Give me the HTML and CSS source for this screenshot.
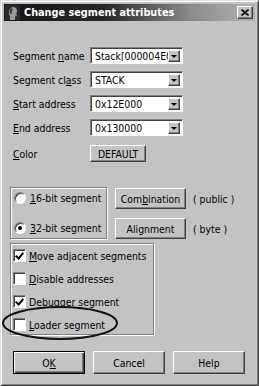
FILE: index.html
```html
<!DOCTYPE html>
<html lang="en">

<head>
    <meta charset="UTF-8">
    <title>Change segment attributes</title>
    <link rel="stylesheet" href="styles.css">
</head>

<body>
    <div class="window">
        <div class="titlebar">
            <svg class="app-icon" width="15" height="15" viewBox="0 0 15 15">
                <rect width="15" height="15" fill="#2a2a2a"/>
                <path d="M5 15 L5 11 Q3 9 4 6 Q5 2 9 2 Q12 3 12 6 Q12 8 11 9 L12 11 Q10 11 10 12 L10 15 Z" fill="#9a9a9a"/>
                <path d="M6 3 Q4 5 5 9 Q6 8 7 9 Q6 6 8 4 Z" fill="#3a3a3a"/>
            </svg>
            <span class="title">Change segment attributes</span>
            <span class="close-btn">
                <svg width="8" height="7" viewBox="0 0 8 7">
                    <path d="M0.5 0.5 L7.5 6.5 M7.5 0.5 L0.5 6.5" stroke="black" stroke-width="1.6"/>
                </svg>
            </span>
        </div>

        <div class="content">
            <div class="fields">
                <label>Segment <u>n</u>ame</label>
                <div class="combo"><span class="combo-text">Stack[000004E0]</span><span class="combo-arrow"></span></div>

                <label>Segment cl<u>a</u>ss</label>
                <div class="combo"><span class="combo-text">STACK</span><span class="combo-arrow"></span></div>

                <label><u>S</u>tart address</label>
                <div class="combo"><span class="combo-text">0x12E000</span><span class="combo-arrow"></span></div>

                <label><u>E</u>nd address</label>
                <div class="combo"><span class="combo-text">0x130000</span><span class="combo-arrow"></span></div>

                <label class="color-label"><u>C</u>olor</label>
                <button class="btn color-btn">DEFAULT</button>
            </div>

            <div class="bitness">
                <div class="group radios">
                    <div class="option"><span class="radio"></span><span><u>1</u>6-bit segment</span></div>
                    <div class="option"><span class="radio checked"></span><span><u>3</u>2-bit segment</span></div>
                </div>
                <div class="attrs">
                    <div class="attr"><button class="btn attr-btn">Com<u>b</u>ination</button><span>(&nbsp;public&nbsp;)</span></div>
                    <div class="attr"><button class="btn attr-btn">Ali<u>g</u>nment</button><span>(&nbsp;byte&nbsp;)</span></div>
                </div>
            </div>

            <div class="group checks">
                <div class="option"><span class="check checked"></span><span><u>M</u>ove adjacent segments</span></div>
                <div class="option"><span class="check"></span><span><u>D</u>isable addresses</span></div>
                <div class="option"><span class="check checked"></span><span>Debu<u>g</u>ger segment</span></div>
                <div class="option"><span class="check"></span><span><u>L</u>oader segment</span></div>
            </div>

            <div class="actions">
                <button class="btn dlg-btn default">O<u>K</u></button>
                <button class="btn dlg-btn">Cancel</button>
                <button class="btn dlg-btn">Help</button>
            </div>
        </div>

        <!-- hand drawn mark around the loader option -->
        <svg class="mark" width="125" height="46" viewBox="0 0 125 46">
            <ellipse cx="59" cy="22" rx="57" ry="16" fill="none" stroke="#111" stroke-width="2"/>
        </svg>
    </div>
</body>

</html>
```

FILE: styles.css
```css
body {
    margin: 0;
    background-color: #c3c3c3;
    color: black;
    font-family: "DejaVu Sans Condensed", "DejaVu Sans", sans-serif;
    font-size: 10.4px;
}

.window {
    position: relative;
    width: 259px;
    height: 386px;
    box-sizing: border-box;
    padding: 3px;
    border: 1px solid;
    border-color: #e0e0e0 #404040 #404040 #e0e0e0;
    box-shadow: inset 1px 1px #fff, inset -1px -1px #808080;
    background-color: #c3c3c3;
}

.titlebar {
    display: flex;
    align-items: center;
    height: 17px;
    padding-left: 1px;
    background: linear-gradient(90deg, #161616 0%, #262626 40%, #8c8c8c 75%, #b2b2b2 100%);
}

.app-icon {
    margin-right: 4px;
}

.title {
    flex: 1;
    color: white;
    font-weight: bold;
    font-size: 10.8px;
}

.close-btn {
    display: flex;
    align-items: center;
    justify-content: center;
    width: 16px;
    height: 13px;
    margin-right: 2px;
    box-sizing: border-box;
    background-color: #c3c3c3;
    border: 1px solid;
    border-color: #fff #404040 #404040 #fff;
    box-shadow: inset -1px -1px #808080;
}

.content {
    padding: 26px 0 0 6px;
}

.fields {
    display: grid;
    grid-template-columns: 77px 93px;
    row-gap: 7px;
    align-items: center;
    margin-left: 3px;
}

.combo {
    display: flex;
    height: 17px;
    box-sizing: border-box;
    border: 1px solid;
    border-color: #808080 #fff #fff #808080;
    box-shadow: inset 1px 1px #404040;
    background-color: white;
    padding: 2px 2px 2px 1px;
}

.combo-text {
    flex: 1;
    overflow: hidden;
    white-space: nowrap;
    padding-left: 3px;
    line-height: 12px;
}

.combo-arrow {
    position: relative;
    width: 12px;
    height: 12px;
    box-sizing: border-box;
    background-color: #c3c3c3;
    border: 1px solid;
    border-color: #fff #404040 #404040 #fff;
    box-shadow: inset -1px -1px #808080;
}

.combo-arrow::after {
    content: "";
    position: absolute;
    left: 2px;
    top: 4px;
    border-left: 3px solid transparent;
    border-right: 3px solid transparent;
    border-top: 3px solid black;
}

.btn {
    box-sizing: border-box;
    padding: 0;
    font-family: inherit;
    font-size: inherit;
    color: black;
    background-color: #c3c3c3;
    border: 1px solid;
    border-color: #fff #404040 #404040 #fff;
    box-shadow: inset -1px -1px #808080;
}

.color-label,
.color-btn {
    margin-top: 2px;
}

.color-btn {
    width: 56px;
    height: 17px;
}

.bitness {
    display: flex;
    gap: 8px;
    margin-top: 25px;
}

.group {
    box-sizing: border-box;
    border: 1px solid #808080;
    box-shadow: inset 1px 1px #fff, 1px 1px #fff;
}

.option {
    display: flex;
    align-items: center;
    white-space: nowrap;
}

.radios {
    display: flex;
    flex-direction: column;
    gap: 16px;
    width: 97px;
    height: 52px;
    padding: 3px 0 3px 3px;
}

.radios .option {
    height: 14px;
    gap: 4px;
}

.radio {
    position: relative;
    width: 12px;
    height: 12px;
    box-sizing: border-box;
    border-radius: 50%;
    background-color: white;
    border: 1px solid;
    border-color: #808080 #fff #fff #808080;
    box-shadow: inset 1px 1px #404040;
}

.radio.checked::after {
    content: "";
    position: absolute;
    left: 3px;
    top: 3px;
    width: 4px;
    height: 4px;
    border-radius: 50%;
    background-color: black;
}

.attrs {
    display: flex;
    flex-direction: column;
    gap: 9px;
    padding-top: 1px;
}

.attr {
    display: flex;
    align-items: center;
    gap: 7px;
}

.attr-btn {
    width: 71px;
    height: 21px;
}

.checks {
    display: flex;
    flex-direction: column;
    gap: 10px;
    width: 144px;
    height: 92px;
    margin-top: 4px;
    padding: 5px 0 0 2px;
}

.checks .option {
    height: 13px;
    gap: 3px;
}

.check {
    position: relative;
    width: 13px;
    height: 13px;
    box-sizing: border-box;
    background-color: white;
    border: 1px solid;
    border-color: #808080 #fff #fff #808080;
    box-shadow: inset 1px 1px #404040;
}

.check.checked::after {
    content: "";
    position: absolute;
    left: 3px;
    top: 1px;
    width: 3px;
    height: 6px;
    border: solid black;
    border-width: 0 2px 2px 0;
    transform: rotate(40deg);
}

.actions {
    display: flex;
    gap: 8px;
    margin-top: 16px;
    padding-left: 3px;
}

.dlg-btn {
    width: 72px;
    height: 23px;
}

.dlg-btn.default {
    border: 1px solid black;
    box-shadow: inset 1px 1px #fff, inset -1px -1px #404040, inset -2px -2px #808080;
}

.mark {
    position: absolute;
    left: 0;
    top: 300px;
}
```
